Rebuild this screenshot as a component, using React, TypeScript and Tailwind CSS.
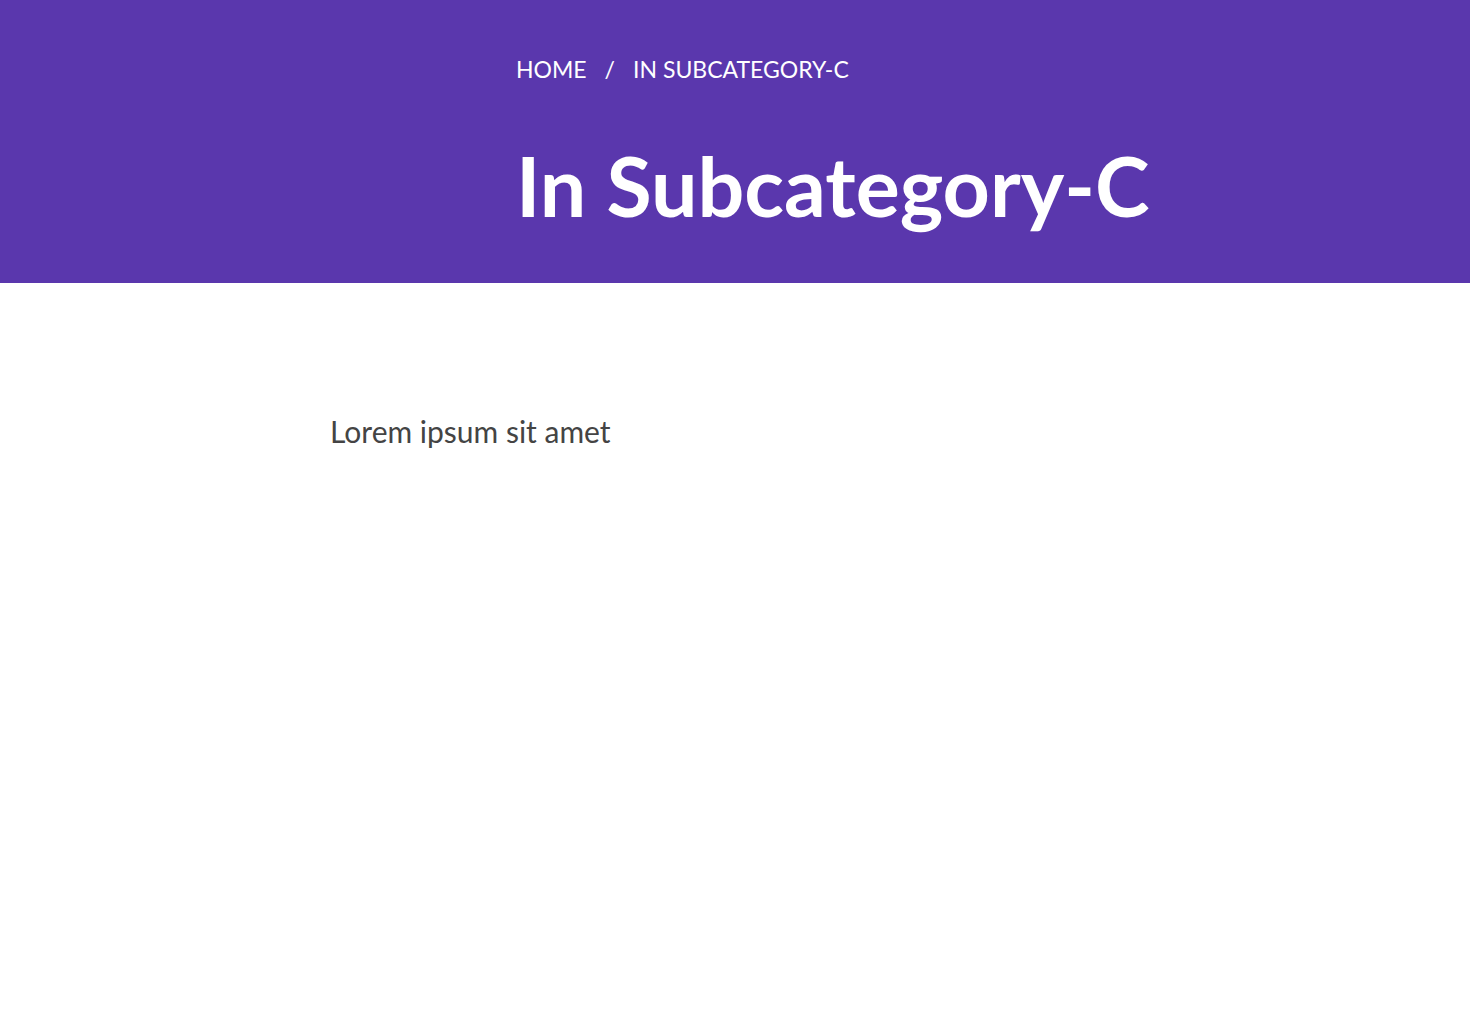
export default function App() {
  return (
    <div className="min-h-screen bg-white" style={{ fontFamily: "Lato, 'Noto Sans', sans-serif" }}>
      <header className="h-[283px] bg-[#5a37ad] text-white">
        <div className="pl-[516px] pt-[54px]">
          <nav className="flex items-center text-[23px] leading-[30px] uppercase">
            <span>Home</span>
            <span className="px-[18px]">/</span>
            <span>In Subcategory-C</span>
          </nav>
          <h1 className="mt-[52px] text-[82.5px] font-bold leading-[1.2]">In Subcategory-C</h1>
        </div>
      </header>
      <main className="pl-[330px] pt-[128px]">
        <p className="text-[30px] leading-[40px] text-[#444444]">Lorem ipsum sit amet</p>
      </main>
    </div>
  );
}
